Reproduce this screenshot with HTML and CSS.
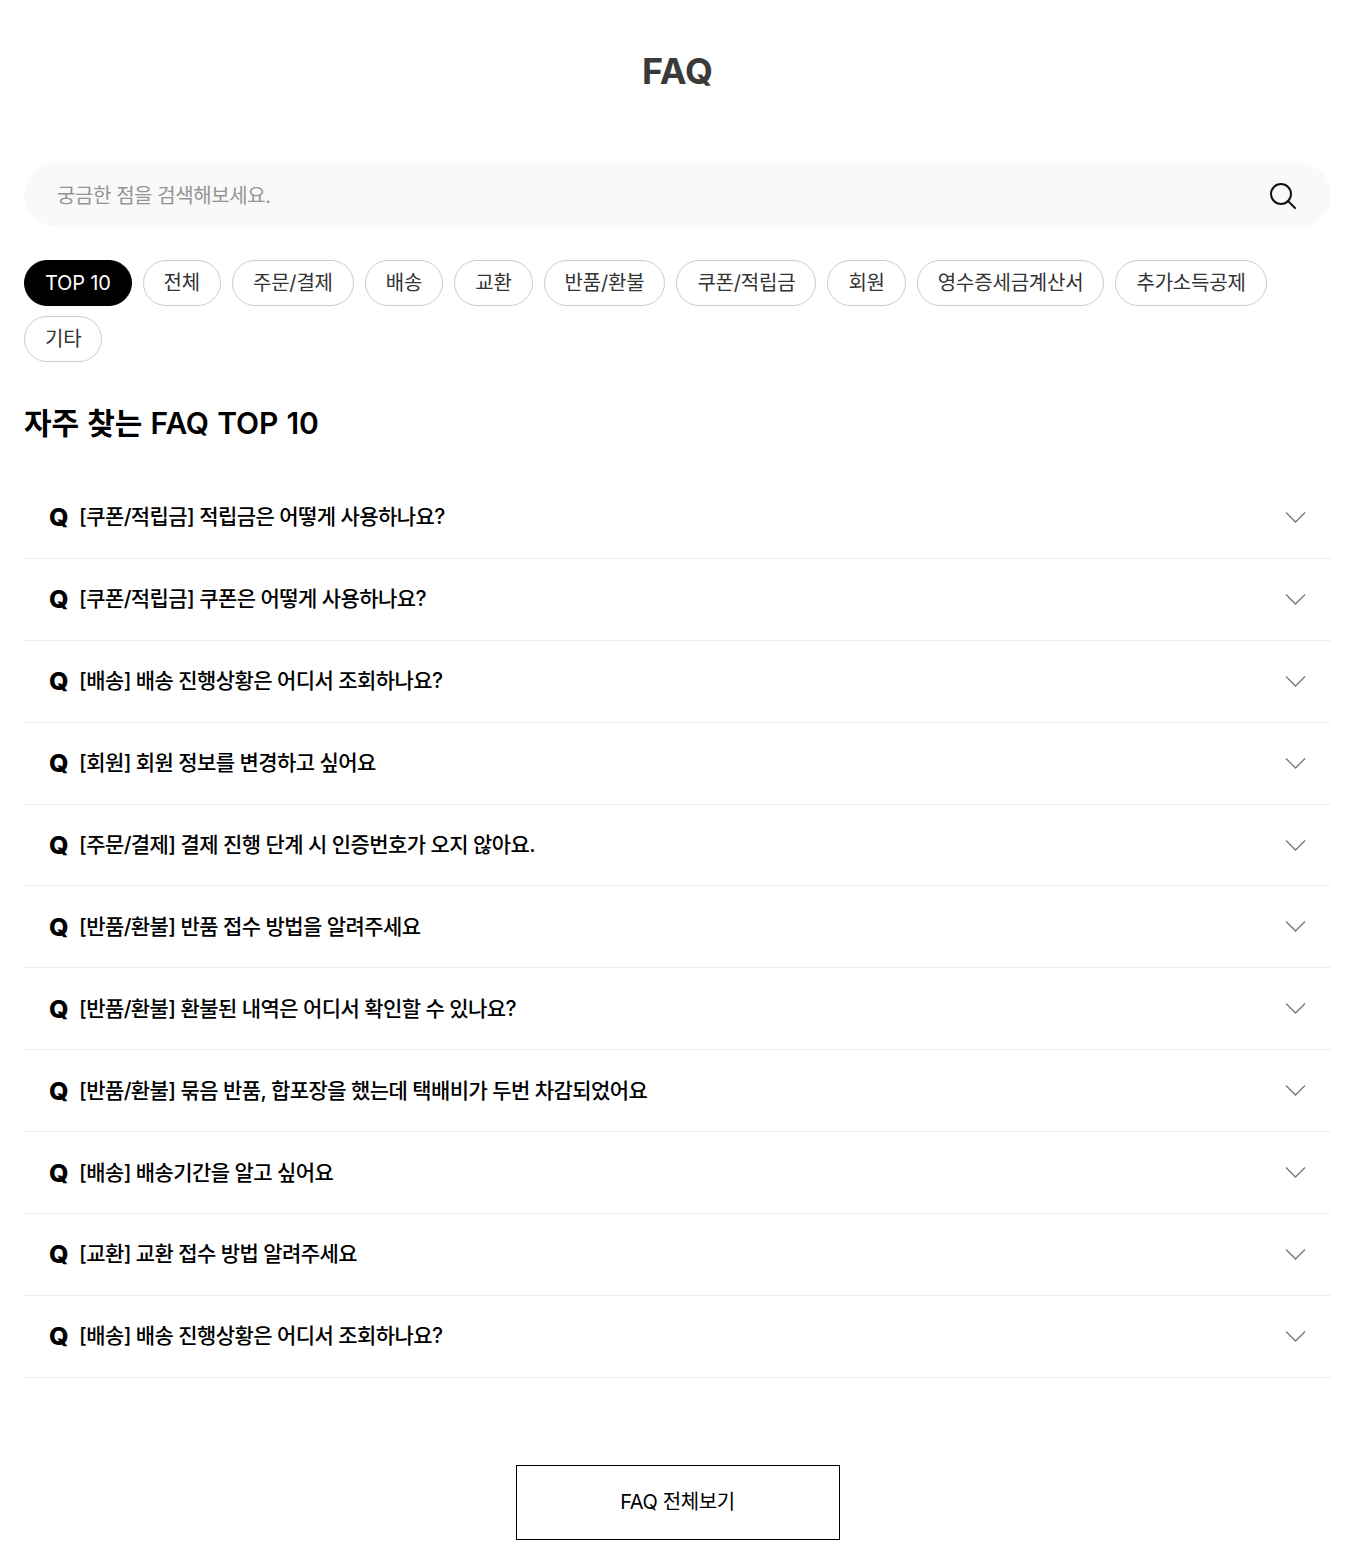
FILE: index.html
```html
<!DOCTYPE html>
<html lang="ko">
<head>
<meta charset="UTF-8" />
<title>FAQ</title>
<link rel="stylesheet" href="styles.css">
</head>
<body>
<div class="container">
  <h1 class="page-title">FAQ</h1>

  <form class="search">
    <input type="text" class="search-input" placeholder="궁금한 점을 검색해보세요." />
    <button type="button" class="search-btn" aria-label="검색">
      <svg width="28" height="28" viewBox="0 0 28 28" fill="none" stroke="#111" stroke-width="2"><circle cx="12" cy="13" r="10"/><path d="M19 20l7 7" stroke-linecap="round"/></svg>
    </button>
  </form>

  <div class="tabs">
    <a class="tab active">TOP 10</a>
    <a class="tab">전체</a>
    <a class="tab">주문/결제</a>
    <a class="tab">배송</a>
    <a class="tab">교환</a>
    <a class="tab">반품/환불</a>
    <a class="tab">쿠폰/적립금</a>
    <a class="tab">회원</a>
    <a class="tab">영수증세금계산서</a>
    <a class="tab">추가소득공제</a>
    <a class="tab">기타</a>
  </div>

  <h2 class="section-title">자주 찾는 FAQ TOP 10</h2>

  <ul class="faq-list">
    <li class="faq-item"><span class="q">Q</span><span class="faq-text">[쿠폰/적립금] 적립금은 어떻게 사용하나요?</span><svg class="chev" width="21" height="11" viewBox="0 0 21 11" fill="none" stroke="#777" stroke-width="1.3"><path d="M1 .5L10.5 10 20 .5"/></svg></li>
    <li class="faq-item"><span class="q">Q</span><span class="faq-text">[쿠폰/적립금] 쿠폰은 어떻게 사용하나요?</span><svg class="chev" width="21" height="11" viewBox="0 0 21 11" fill="none" stroke="#777" stroke-width="1.3"><path d="M1 .5L10.5 10 20 .5"/></svg></li>
    <li class="faq-item"><span class="q">Q</span><span class="faq-text">[배송] 배송 진행상황은 어디서 조회하나요?</span><svg class="chev" width="21" height="11" viewBox="0 0 21 11" fill="none" stroke="#777" stroke-width="1.3"><path d="M1 .5L10.5 10 20 .5"/></svg></li>
    <li class="faq-item"><span class="q">Q</span><span class="faq-text">[회원] 회원 정보를 변경하고 싶어요</span><svg class="chev" width="21" height="11" viewBox="0 0 21 11" fill="none" stroke="#777" stroke-width="1.3"><path d="M1 .5L10.5 10 20 .5"/></svg></li>
    <li class="faq-item"><span class="q">Q</span><span class="faq-text">[주문/결제] 결제 진행 단계 시 인증번호가 오지 않아요.</span><svg class="chev" width="21" height="11" viewBox="0 0 21 11" fill="none" stroke="#777" stroke-width="1.3"><path d="M1 .5L10.5 10 20 .5"/></svg></li>
    <li class="faq-item"><span class="q">Q</span><span class="faq-text">[반품/환불] 반품 접수 방법을 알려주세요</span><svg class="chev" width="21" height="11" viewBox="0 0 21 11" fill="none" stroke="#777" stroke-width="1.3"><path d="M1 .5L10.5 10 20 .5"/></svg></li>
    <li class="faq-item"><span class="q">Q</span><span class="faq-text">[반품/환불] 환불된 내역은 어디서 확인할 수 있나요?</span><svg class="chev" width="21" height="11" viewBox="0 0 21 11" fill="none" stroke="#777" stroke-width="1.3"><path d="M1 .5L10.5 10 20 .5"/></svg></li>
    <li class="faq-item"><span class="q">Q</span><span class="faq-text">[반품/환불] 묶음 반품, 합포장을 했는데 택배비가 두번 차감되었어요</span><svg class="chev" width="21" height="11" viewBox="0 0 21 11" fill="none" stroke="#777" stroke-width="1.3"><path d="M1 .5L10.5 10 20 .5"/></svg></li>
    <li class="faq-item"><span class="q">Q</span><span class="faq-text">[배송] 배송기간을 알고 싶어요</span><svg class="chev" width="21" height="11" viewBox="0 0 21 11" fill="none" stroke="#777" stroke-width="1.3"><path d="M1 .5L10.5 10 20 .5"/></svg></li>
    <li class="faq-item"><span class="q">Q</span><span class="faq-text">[교환] 교환 접수 방법 알려주세요</span><svg class="chev" width="21" height="11" viewBox="0 0 21 11" fill="none" stroke="#777" stroke-width="1.3"><path d="M1 .5L10.5 10 20 .5"/></svg></li>
    <li class="faq-item"><span class="q">Q</span><span class="faq-text">[배송] 배송 진행상황은 어디서 조회하나요?</span><svg class="chev" width="21" height="11" viewBox="0 0 21 11" fill="none" stroke="#777" stroke-width="1.3"><path d="M1 .5L10.5 10 20 .5"/></svg></li>
  </ul>

  <div class="more">
    <a class="more-btn">FAQ 전체보기</a>
  </div>
</div>
</body>
</html>
```

FILE: styles.css
```css
* {
  box-sizing: border-box;
}
body {
  margin: 0;
  background: #fff;
  color: #000;
  font-family: "Inter", "Noto Sans CJK KR", sans-serif;
}
.container {
  padding: 0 17px 24px 24px;
}
.page-title {
  margin: 0;
  padding-top: 48px;
  height: 163px;
  font-size: 36px;
  line-height: 46px;
  font-weight: 700;
  color: #3a3a3a;
  text-align: center;
}
.search {
  display: flex;
  align-items: center;
  height: 64px;
  padding: 0 34px 0 33px;
  background: #f9f9f9;
  border-radius: 32px;
}
.search-input {
  flex: 1;
  border: none;
  outline: none;
  background: transparent;
  font-family: inherit;
  font-size: 20px;
  letter-spacing: -0.42px;
  color: #333;
  padding: 2px 0 0;
}
.search-input::placeholder {
  color: #949494;
}
.search-btn {
  display: flex;
  padding: 0;
  border: none;
  background: none;
}
.tabs {
  display: flex;
  flex-wrap: wrap;
  gap: 10px 11px;
  margin-top: 33px;
}
.tab {
  height: 46px;
  padding: 0 20px;
  border: 1px solid #ccc;
  border-radius: 23px;
  font-size: 20px;
  line-height: 44px;
  letter-spacing: -0.2px;
  color: #333;
}
.tab.active {
  background: #000;
  border-color: #000;
  color: #fff;
}
.section-title {
  margin: 41px 0 0;
  font-size: 30px;
  line-height: 40px;
  font-weight: 600;
  letter-spacing: -0.15px;
  word-spacing: 1px;
}
.faq-list {
  list-style: none;
  margin: 34px 0 0;
  padding: 0;
}
.faq-item {
  display: flex;
  align-items: center;
  height: 81.9px;
  padding: 0 25px;
  border-bottom: 1px solid #eee;
}
.q {
  width: 30px;
  flex-shrink: 0;
  font-size: 25px;
  font-weight: 800;
}
.faq-text {
  flex: 1;
  margin-bottom: 4px;
  font-size: 21px;
  font-weight: 500;
  letter-spacing: -0.58px;
}
.more {
  display: flex;
  justify-content: center;
  margin-top: 87px;
}
.more-btn {
  width: 324px;
  height: 75px;
  border: 1px solid #000;
  font-size: 20px;
  line-height: 73px;
  text-align: center;
  letter-spacing: -0.4px;
}
```
